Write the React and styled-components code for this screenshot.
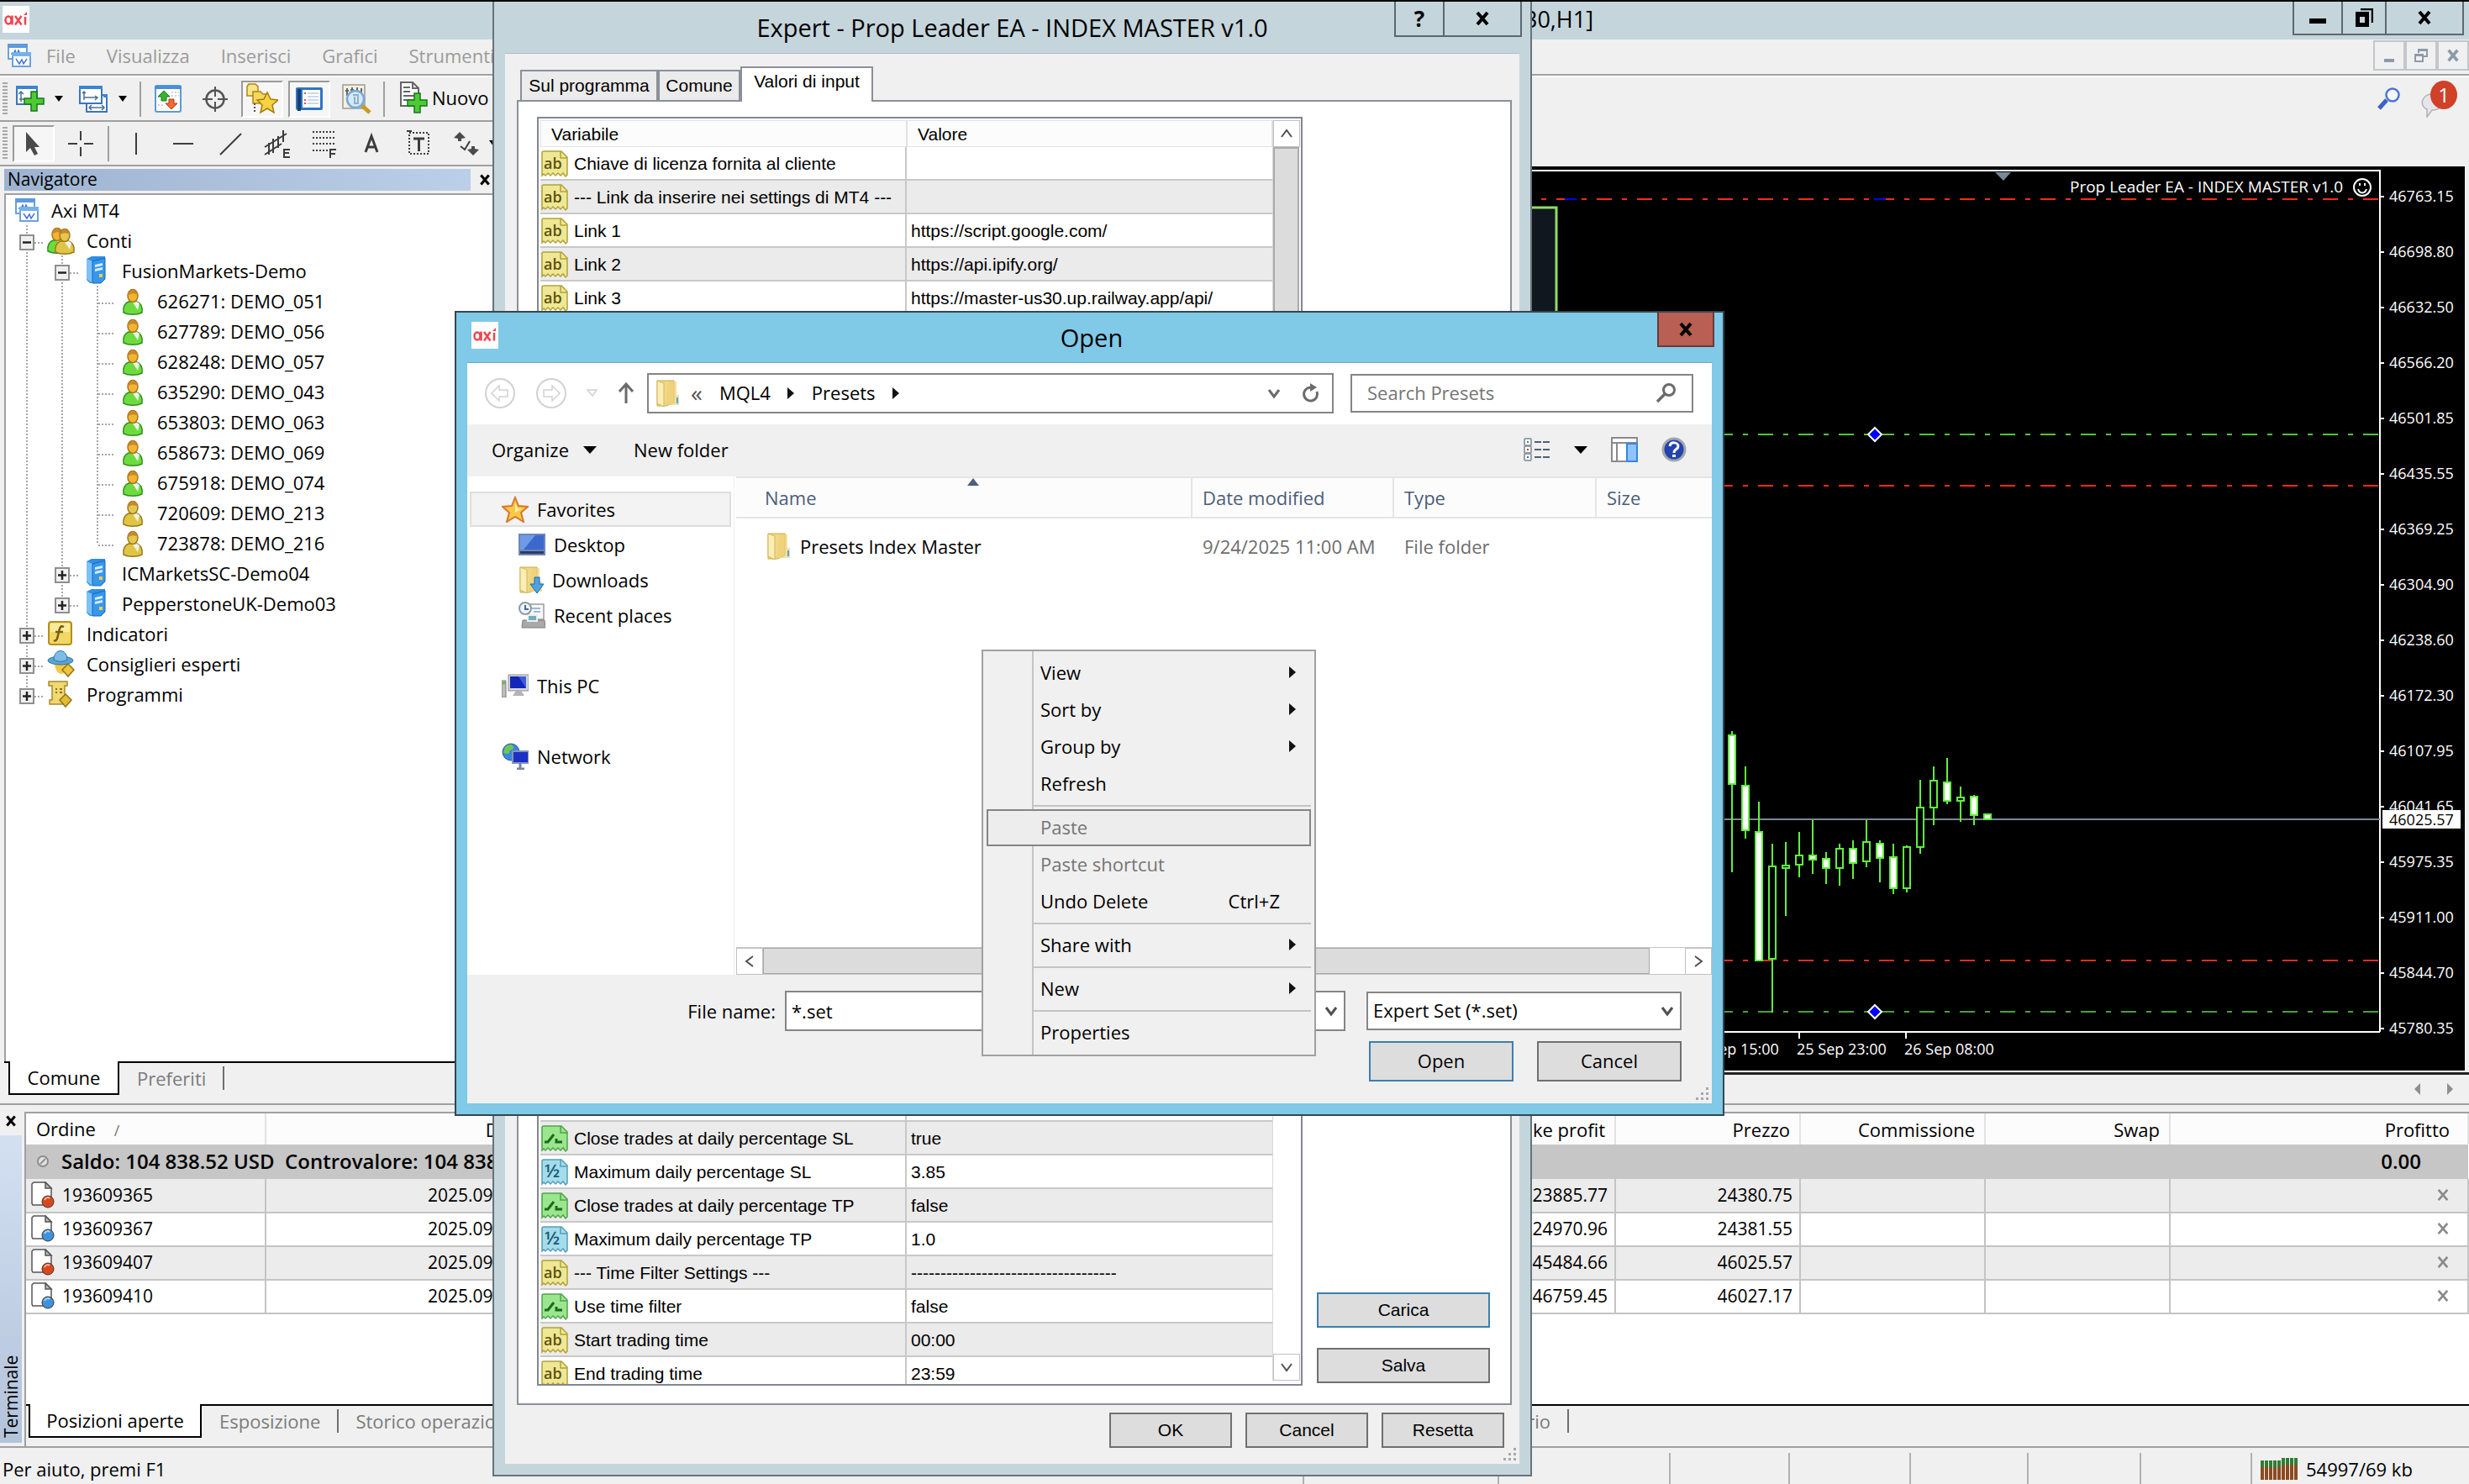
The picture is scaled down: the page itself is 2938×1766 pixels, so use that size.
import styled, { createGlobalStyle, css } from 'styled-components';

const accounts = [
  ['626271: DEMO_051', true],
  ['627789: DEMO_056', true],
  ['628248: DEMO_057', true],
  ['635290: DEMO_043', true],
  ['653803: DEMO_063', true],
  ['658673: DEMO_069', true],
  ['675918: DEMO_074', true],
  ['720609: DEMO_213', false],
  ['723878: DEMO_216', false],
];

const tree = [
  { label: 'Axi MT4', icon: 'charts', guides: [] },
  { label: 'Conti', icon: 'people', guides: ['minus'] },
  { label: 'FusionMarkets-Demo', icon: 'server', guides: ['line', 'minus'] },
  ...accounts.map(([label, active], i) => ({
    label,
    icon: active ? 'userGreen' : 'userGold',
    guides: ['line', 'line', i === accounts.length - 1 ? 'end' : 'tee'],
  })),
  { label: 'ICMarketsSC-Demo04', icon: 'server', guides: ['line', 'plus'] },
  { label: 'PepperstoneUK-Demo03', icon: 'server', guides: ['line', 'plusEnd'] },
  { label: 'Indicatori', icon: 'indicator', guides: ['plus'] },
  { label: 'Consiglieri esperti', icon: 'expert', guides: ['plus'] },
  { label: 'Programmi', icon: 'script', guides: ['plusEnd'] },
];

const orders = [
  { id: '193609365', date: '2025.09.25', tp: '23885.77', price: '24380.75', color: '#d8481c' },
  { id: '193609367', date: '2025.09.25', tp: '24970.96', price: '24381.55', color: '#3b93de' },
  { id: '193609407', date: '2025.09.25', tp: '45484.66', price: '46025.57', color: '#d8481c' },
  { id: '193609410', date: '2025.09.25', tp: '46759.45', price: '46027.17', color: '#3b93de' },
];

const topInputs = [
  ['text', 'Chiave di licenza fornita al cliente', ''],
  ['text', '--- Link da inserire nei settings di MT4 ---', ''],
  ['text', 'Link 1', 'https://script.google.com/'],
  ['text', 'Link 2', 'https://api.ipify.org/'],
  ['text', 'Link 3', 'https://master-us30.up.railway.app/api/'],
];

const bottomInputs = [
  ['bool', 'Close trades at daily percentage SL', 'true'],
  ['num', 'Maximum daily percentage SL', '3.85'],
  ['bool', 'Close trades at daily percentage TP', 'false'],
  ['num', 'Maximum daily percentage TP', '1.0'],
  ['text', '--- Time Filter Settings ---', '-----------------------------------'],
  ['bool', 'Use time filter', 'false'],
  ['text', 'Start trading time', '00:00'],
  ['text', 'End trading time', '23:59'],
];

const prices = [
  '46763.15', '46698.80', '46632.50', '46566.20', '46501.85', '46435.55', '46369.25', '46304.90',
  '46238.60', '46172.30', '46107.95', '46041.65', '45975.35', '45911.00', '45844.70', '45780.35',
];

// wick top, body top, body bottom, wick bottom, filled
const candles = [
  [672, 677, 735, 840, 1], [714, 737, 790, 800, 1], [756, 792, 945, 945, 1], [806, 833, 943, 1007, 0],
  [804, 832, 835, 892, 0], [792, 820, 831, 846, 0], [778, 820, 825, 842, 1], [816, 824, 835, 854, 1],
  [806, 812, 835, 856, 0], [802, 812, 829, 848, 1], [778, 804, 827, 834, 0], [802, 806, 823, 852, 1],
  [806, 822, 859, 866, 1], [808, 810, 859, 864, 0], [730, 763, 810, 818, 0], [714, 731, 763, 784, 0],
  [704, 733, 755, 759, 1], [738, 751, 755, 780, 0], [748, 750, 772, 784, 1], [771, 771, 777, 777, 1],
];

/* ---------- icons ---------- */

const AxiLogo = () => (
  <svg width="32" height="32" viewBox="0 0 32 32" role="img" aria-label="axi">
    <rect width="32" height="32" fill="#fff" />
    <g fill="none" stroke="#ee4450" strokeWidth="2.500">
      <ellipse cx="7" cy="17" rx="3.500" ry="4.500" />
      <path d="M11.500 11.500v11M15 12l7.500 10.500M22.500 12L15 22.500M27 13v9.500" />
    </g>
    <path d="M25 11l4-4v4z" fill="#ee4450" />
  </svg>
);

const Cross = ({ size = 18, color = '#000', weight = 4 }) => (
  <svg width={size} height={size} viewBox="0 0 18 18">
    <path d="M3 2l12 14M15 2L3 16" stroke={color} strokeWidth={weight} />
  </svg>
);

const Caret = () => (
  <svg width="16" height="9" viewBox="0 0 16 9"><path d="M0 0h16L8 9z" fill="#000" /></svg>
);

const SmallCaret = () => (
  <svg width="10" height="7" viewBox="0 0 10 7"><path d="M0 0h10L5 7z" fill="#000" /></svg>
);

const Play = () => (
  <svg width="9" height="14" viewBox="0 0 9 14"><path d="M0 0l8 7-8 7z" fill="#111" /></svg>
);

const Chevron = ({ turn = 0, color = '#505050', weight = 3 }) => (
  <svg width="18" height="18" viewBox="0 0 18 18">
    <path d="M3 5l6 8 6-8" fill="none" stroke={color} strokeWidth={weight} transform={`rotate(${turn} 9 9)`} />
  </svg>
);

const Grip = () => (
  <svg width="18" height="18" viewBox="0 0 18 18" fill="#a8a8a8">
    <path d="M13 1h3v3h-3zM13 7h3v3h-3zM13 13h3v3h-3zM7 7h3v3H7zM7 13h3v3H7zM1 13h3v3H1z" />
  </svg>
);

const MiniCharts = ({ x = 0, y = 0 }) => (
  <g transform={`translate(${x} ${y})`}>
    <rect x="1" y="1" width="22" height="17" fill="#fff" stroke="#6fa0d8" strokeWidth="2" />
    <path d="M0 0h24v5H0z" fill="#5d9bdc" />
    <path d="M4 12h3l2-4 2 5 2-5 2 4h4" fill="none" stroke="#4a72d8" strokeWidth="1.500" />
    <rect x="6" y="11" width="21" height="16" fill="#fff" stroke="#6fa0d8" strokeWidth="2" />
    <path d="M5 10h23v5H5z" fill="#74b3ea" />
    <path d="M10 18l4 6 3-5 2 5 4-6" fill="none" stroke="#4a72d8" strokeWidth="1.500" />
  </g>
);

const Person = ({ x = 0, y = 0, body = '#6ddb3e', edge = '#2f8f1c', head = '#f3b530' }) => (
  <g transform={`translate(${x} ${y})`}>
    <path d="M1 28c-1-7 1-11 6-13h10c5 2 7 6 6 13-6 3-16 3-22 0z" fill={body} stroke={edge} strokeWidth="1.500" />
    <path d="M12 16l6 9 2-8-3-2z" fill="#ecf3e6" />
    <ellipse cx="12" cy="8" rx="6" ry="7.500" fill={head} stroke="#a8741a" strokeWidth="1.500" />
    <path d="M6 8c0-8 12-8 12-1-4-2-8-3-12 1z" fill="#c8892a" />
  </g>
);

const gold = { body: '#e0c545', edge: '#95791a', head: '#e3c84f' };

const TreeIcon = ({ name }) => (
  <svg width="50" height="36" viewBox="0 0 50 36">
    {name === 'charts' && <MiniCharts x={7} y={4} />}
    {name === 'people' && (
      <>
        <Person x={3} y={3} />
        <Person x={12} y={4} {...gold} />
      </>
    )}
    {name === 'userGreen' && <Person x={9} y={4} />}
    {name === 'userGold' && <Person x={9} y={4} {...gold} />}
    {name === 'server' && (
      <>
        <path d="M8 4l6-3h16v27l-6 5H12l-4-4z" fill="#2f8fe6" />
        <path d="M8 4l7 3v26l-7-5z" fill="#7cc2f7" />
        <path d="M15 7l15-4v25l-5 5H15z" fill="#3797ee" stroke="#1867b8" />
        <path d="M18 11l9-2v3l-9 2zM18 16l9-2v3l-9 2z" fill="#d5ecff" />
        <path d="M23 22h4v4h-4z" fill="#f5d23a" />
      </>
    )}
    {name === 'indicator' && (
      <>
        <rect x="5" y="4" width="27" height="27" rx="3" fill="#f2d766" stroke="#b38f22" strokeWidth="2" />
        <path d="M7 6h23v10H7z" fill="#faeb9c" />
        <path d="M23 10c-4-2-5 1-6 6l-2 8c-1 2-2 3-4 2M13 16h9" fill="none" stroke="#7a5f12" strokeWidth="2.500" />
      </>
    )}
    {name === 'expert' && (
      <>
        <path d="M12 16h16c1 10-5 14-8 14s-8-4-8-14z" fill="#f4c842" />
        <ellipse cx="19" cy="14" rx="15" ry="5" fill="#5ba4d4" stroke="#2c73a6" />
        <path d="M11 13c0-14 16-14 16 0-5 3-11 3-16 0z" fill="#7bbde6" stroke="#2c73a6" />
        <path d="M28 18l7 7-7 8-7-8z" fill="#edc63e" stroke="#92741a" strokeWidth="1.500" />
      </>
    )}
    {name === 'script' && (
      <>
        <path d="M5 3h22v5h-3v17h3v5H6v-5h3V8H5z" fill="#f2d870" stroke="#a88a2a" strokeWidth="1.500" />
        <path d="M13 12h2M18 12h3M13 16h2M18 16h3" stroke="#8c7020" strokeWidth="2" />
        <path d="M25 18l7 7-7 8-7-8z" fill="#e3bb34" stroke="#92741a" strokeWidth="1.500" />
      </>
    )}
  </svg>
);

const Guide = ({ kind }) => {
  const box = kind === 'plus' || kind === 'minus' || kind === 'plusEnd';
  const stops = kind === 'end' || kind === 'plusEnd';
  return (
    <svg width="42" height="36" viewBox="0 0 42 36">
      <path d={stops ? 'M21 0v20' : 'M21 0v36'} stroke="#8a8a8a" strokeWidth="1.500" strokeDasharray="2 2" />
      {kind !== 'line' && <path d="M22 21h20" stroke="#8a8a8a" strokeWidth="1.500" strokeDasharray="2 2" />}
      {box && <rect x="13" y="12" width="16" height="17" fill="#f0f0f0" stroke="#8f8f8f" strokeWidth="2" />}
      {box && <path d="M16 20.500h10" stroke="#222" strokeWidth="2.500" />}
      {box && kind !== 'minus' && <path d="M21 15v11" stroke="#222" strokeWidth="2.500" />}
    </svg>
  );
};

const pageColors = {
  text: ['#efe794', '#b1a23a'],
  num: ['#a5dcec', '#559fb5'],
  bool: ['#9be58f', '#4ea548'],
};

const InputIcon = ({ type }) => (
  <svg width="32" height="32" viewBox="0 0 32 32">
    <path
      d="M1 3c0-1 1-2 2-2h21l7 7v21l-2 2-3-4-3 3-3-3-3 3-3-3-3 3-3-3-3 3-2-2-2 2z"
      fill={pageColors[type][0]}
      stroke={pageColors[type][1]}
      strokeWidth="1.500"
    />
    <path d="M23 1v8h8" fill="none" stroke={pageColors[type][1]} strokeWidth="1.500" />
    {type === 'text' && <IconText x="3" y="22" $size={18} $color="#5d520f">ab</IconText>}
    {type === 'num' && <IconText x="4" y="22" $size={22} $color="#175a73">½</IconText>}
    {type === 'bool' && <path d="M4 20h4l7-9M18 16v4h7" fill="none" stroke="#1c6b1a" strokeWidth="3" />}
  </svg>
);

const Plus = ({ x, y }) => (
  <path
    transform={`translate(${x} ${y})`}
    d="M8 0h7v8h8v7h-8v8H8v-8H0V8h8z"
    fill="#4ccb35"
    stroke="#17751a"
    strokeWidth="1.500"
  />
);

const NewChartIcon = () => (
  <svg width="36" height="36" viewBox="0 0 36 36">
    <rect x="2" y="3" width="24" height="21" fill="#fff" stroke="#3a75bd" strokeWidth="2" />
    <path d="M1 2h26v4H1z" fill="#3a86d4" />
    <path d="M7 9v12M4 12l3-3 3 3M5 18h8" fill="none" stroke="#4f6f94" strokeWidth="1.500" />
    <Plus x={11} y={9} />
  </svg>
);

const WindowsIcon = () => (
  <svg width="36" height="36" viewBox="0 0 36 36">
    <rect x="10" y="13" width="24" height="20" fill="#fff" stroke="#3a75bd" strokeWidth="2" />
    <path d="M30 12h5v4h-5z" fill="#3a86d4" />
    <path d="M13 28h18M16 25l-3 3 3 3M28 25l3 3-3 3" fill="none" stroke="#4f6f94" strokeWidth="1.500" />
    <rect x="2" y="3" width="26" height="20" fill="#fff" stroke="#3a75bd" strokeWidth="2" />
    <path d="M1 2h28v4H1z" fill="#3a86d4" />
    <path d="M7 9v10M5 11l2-2 2 2M7 16h16M20 14l3 2-3 3" fill="none" stroke="#4f6f94" strokeWidth="1.500" />
  </svg>
);

const MarketIcon = () => (
  <svg width="36" height="36" viewBox="0 0 36 36">
    <rect x="3" y="2" width="30" height="31" rx="2" fill="#fff" stroke="#5a9ad8" strokeWidth="2" />
    <path d="M2 2h32v4H2z" fill="#4a90d9" />
    <path d="M13 8l7 7h-4v5h-6v-5H6z" fill="#36b52c" stroke="#1c7a1a" />
    <path d="M22 30l-7-7h4v-5h6v5h4z" fill="#f06a36" stroke="#b53912" />
    <path d="M22 10h9M22 14h9M6 25h6" stroke="#c5c5c5" strokeWidth="1.500" strokeDasharray="2 2" />
  </svg>
);

const TargetIcon = () => (
  <svg width="32" height="32" viewBox="0 0 32 32" fill="none" stroke="#555">
    <circle cx="16" cy="16" r="10.500" strokeWidth="2.500" />
    <path d="M16 1v12M16 19v12M1 16h12M19 16h12" strokeWidth="2" />
  </svg>
);

const FolderStarIcon = () => (
  <svg width="38" height="38" viewBox="0 0 38 38">
    <path d="M1 4l2-3h8l3 3v11H1z" fill="#f8e48a" stroke="#ad8616" strokeWidth="1.500" />
    <path d="M8 10h9l3 3h6v11H8z" fill="#f4d65c" stroke="#ad8616" strokeWidth="1.500" />
    <path d="M10 24v12" stroke="#555" strokeWidth="2" strokeDasharray="2 2" />
    <path d="M25 11l4 8 9 1-7 6 2 9-8-5-8 5 2-9-6-6 8-1z" fill="#f6d33f" stroke="#a67c12" strokeWidth="1.500" />
  </svg>
);

const NotebookIcon = () => (
  <svg width="34" height="34" viewBox="0 0 34 34">
    <rect x="1" y="3" width="32" height="27" rx="2" fill="#2e74c4" />
    <path d="M9 6h21v21H9z" fill="#fff" />
    <path d="M3 5h4v26H3z" fill="#163e73" />
    <path d="M15 10h13M15 14h13M15 18h13M15 22h13" stroke="#b9cbe2" strokeWidth="1.500" />
    <path d="M11 9h2v2h-2zM11 17h2v2h-2zM11 21h2v2h-2z" fill="#e2554a" />
  </svg>
);

const TesterIcon = () => (
  <svg width="38" height="38" viewBox="0 0 38 38">
    <path d="M3 2h26v28H3z" fill="#f4f0e2" stroke="#9a9a8c" strokeWidth="1.500" />
    <path d="M8 6v9M14 5v10M20 5v9M25 6v6M6 9h4M12 8h4M18 10h4" stroke="#666" strokeWidth="2" />
    <path d="M25 26l10 9" stroke="#c99a22" strokeWidth="5" />
    <circle cx="18" cy="19" r="10" fill="#d4e9f9" stroke="#7aa9d4" strokeWidth="2.500" />
    <path d="M15 14h6v10h-4v-8" fill="none" stroke="#8fb0cc" strokeWidth="2" />
  </svg>
);

const NewOrderIcon = () => (
  <svg width="36" height="40" viewBox="0 0 36 40">
    <path d="M3 2h14l7 7v21H3z" fill="#fff" stroke="#666" strokeWidth="2" />
    <path d="M17 2v7h7M6 8h8M6 13h8M6 18h15M6 23h12" fill="none" stroke="#666" strokeWidth="2" />
    <Plus x={11} y={15} />
  </svg>
);

const DrawIcon = ({ name }) => (
  <svg width="32" height="36" viewBox="0 0 32 36" fill="none" stroke="#3c3c3c" strokeWidth="2">
    {name === 'cursor' && <path d="M7 4v24l5-5 5 9 4-2-4-8h6z" fill="#4a4a4a" stroke="none" />}
    {name === 'cross' && <path d="M16 3v11M16 22v11M1 18h11M20 18h11" />}
    {name === 'vline' && <path d="M16 5v26" />}
    {name === 'hline' && <path d="M4 18h24" />}
    {name === 'trend' && <path d="M4 31L29 6" />}
    {name === 'channel' && (
      <>
        <path d="M1 22L27 6M1 31l20-13M6 17v14M11 12v17M17 9v14M23 2v14" />
        <path d="M31 25h-7v9h7M24 29h6" />
      </>
    )}
    {name === 'fibo' && (
      <>
        <path d="M2 4h28M2 11h28M2 18h28M2 26h18" strokeDasharray="2 2" />
        <path d="M30 25h-7v10M23 30h6" />
      </>
    )}
    {name === 'text' && <path d="M9 28l7-19 7 19M11 22h10" strokeWidth="3" />}
    {name === 'label' && (
      <>
        <rect x="5" y="5" width="23" height="25" strokeDasharray="2 2" />
        <path d="M2 3h6" />
        <path d="M10 12h13M16.500 12v15" strokeWidth="3" />
      </>
    )}
    {name === 'arrows' && (
      <>
        <path d="M9 4l7 7-5 1v3H7v-3l-5-1zM25 32l-7-7 5-1v-3h4v3l5 1z" fill="#4a4a4a" stroke="none" />
        <path d="M10 21l5 4 6-10" />
      </>
    )}
  </svg>
);

const SearchGlass = () => (
  <svg width="30" height="30" viewBox="0 0 30 30" fill="none">
    <path d="M3 27l9-10" stroke="#3c62c8" strokeWidth="5" />
    <circle cx="19" cy="11" r="7.500" fill="#f5f9ff" stroke="#4d74d8" strokeWidth="2.500" />
  </svg>
);

const FolderIcon = ({ arrow }) => (
  <svg width="30" height="34" viewBox="0 0 30 34">
    <path d="M2 2h20v26l-9 4H2z" fill="#f0d885" stroke="#c9a94a" />
    <path d="M2 2l8 3v28l-8-4z" fill="#fbeeb4" stroke="#d3b65b" />
    <path d="M16 3h9v16h3v12H12z" fill="#ecd277" opacity=".7" />
    {arrow ? (
      <path d="M19 14h6v8h5l-8 11-8-11h5z" fill="#4fa3e3" stroke="#1b69b3" />
    ) : (
      <path d="M25 22h2v7h-2z" fill="#4fa3e3" />
    )}
  </svg>
);

const StarIcon = () => (
  <svg width="32" height="32" viewBox="0 0 32 32">
    <path d="M16 2l4 10 11 1-8 7 3 11-10-6-10 6 3-11-8-7 11-1z" fill="#fbc847" stroke="#d9772a" strokeWidth="2" />
    <path d="M16 7l3 8h6l-9 5z" fill="#fdeaa0" />
  </svg>
);

const DesktopIcon = () => (
  <svg width="32" height="28" viewBox="0 0 32 28">
    <path d="M0 1h32v26H0z" fill="#6e86b8" />
    <path d="M2 3h28v17H2z" fill="#3b68cd" />
    <path d="M2 3h18L6 20H2z" fill="#6f9ae8" />
    <path d="M2 22h28v3H2z" fill="#2c3d63" />
  </svg>
);

const RecentIcon = () => (
  <svg width="32" height="32" viewBox="0 0 32 32">
    <path d="M12 3h18v18H12z" fill="#f7f7f7" stroke="#9c9c9c" strokeWidth="1.500" />
    <path d="M16 8h10M18 12h8" stroke="#9bb8d8" strokeWidth="2" />
    <path d="M5 22h26l1 9H4z" fill="#a9a9a9" stroke="#7e7e7e" />
    <path d="M11 16h11v7H11z" fill="#6fb1b8" stroke="#eee" strokeWidth="2" />
    <circle cx="8" cy="8" r="7" fill="#eef4f8" stroke="#8e9aa5" strokeWidth="2" />
    <path d="M8 4v5h4" fill="none" stroke="#49688c" strokeWidth="2" />
  </svg>
);

const PcIcon = () => (
  <svg width="32" height="28" viewBox="0 0 32 28">
    <path d="M0 8h5v20H0z" fill="#bdbdbd" stroke="#7c7c7c" />
    <path d="M1 11h3" stroke="#58c33c" strokeWidth="3" />
    <path d="M8 1h24v19H8z" fill="#d6d6d6" stroke="#8d8d8d" />
    <path d="M10 3h19v14H10z" fill="#1226b8" />
    <path d="M20 3h9v14z" fill="#3c5be0" />
    <path d="M17 20h6l4 6H13z" fill="#b3b3b3" />
  </svg>
);

const NetworkIcon = () => (
  <svg width="32" height="32" viewBox="0 0 32 32">
    <circle cx="11" cy="11" r="10" fill="#3d87d8" stroke="#2a5c9c" />
    <path d="M4 5c6-5 9-3 10 0s-5 3-5 6-4 2-7 1z" fill="#72c455" />
    <path d="M13 10h19v14H13z" fill="#1c30c4" stroke="#8594b8" strokeWidth="2" />
    <path d="M22 24v6M18 31h9" stroke="#7a869e" strokeWidth="3" />
  </svg>
);

const ArrowCircle = ({ flip }) => (
  <svg width="38" height="38" viewBox="0 0 38 38" fill="none" stroke="#d2d2d2">
    <circle cx="19" cy="19" r="17" strokeWidth="2" />
    <path
      d="M9 19l9-9v5h10v8H18v5z"
      strokeWidth="1.500"
      transform={flip ? 'rotate(180 19 19)' : undefined}
    />
  </svg>
);

const HelpIcon = () => (
  <svg width="30" height="30" viewBox="0 0 30 30">
    <circle cx="15" cy="15" r="13" fill="#2343ad" stroke="#a3a6ad" strokeWidth="3" />
    <path d="M10 11c1-6 10-5 10 0 0 4-5 3-5 8" fill="none" stroke="#fff" strokeWidth="3" />
    <path d="M13 21h4v3h-4z" fill="#fff" />
  </svg>
);

const OrderIcon = ({ color }) => (
  <svg width="30" height="32" viewBox="0 0 30 32">
    <path d="M2 3l2-2h14l7 7v20H3l-1-2z" fill="#fff" stroke="#555" strokeWidth="1.500" />
    <path d="M18 1v7h7z" fill="#bbb" stroke="#555" strokeWidth="1.500" />
    <circle cx="21" cy="24" r="7" fill={color} stroke="#44311f" strokeWidth="1" />
    <path d="M17 22c2-4 5-3 6-2" fill="none" stroke="#fff" strokeOpacity=".6" strokeWidth="2" />
  </svg>
);

const Chart = () => (
  <ChartSvg viewBox="0 0 1111 1072" role="img" aria-label="US30,H1">
    <path d="M-10 49H30V200H-10z" fill="#10171f" stroke="#8fdc66" strokeWidth="3" />
    <path d="M0 5H1010V1030M1010 1030H0" fill="none" stroke="#fff" strokeWidth="2" />
    <path d="M552 7h19l-9 10z" fill="#778899" />
    <ChartText x="641" y="31" $size={19}>Prop Leader EA - INDEX MASTER v1.0</ChartText>
    <g fill="none" stroke="#fff" strokeWidth="2">
      <circle cx="989" cy="25" r="10" />
      <path d="M984 27c2 6 8 6 10 0M986 20v3M992 20v3" />
    </g>
    {[[39, '#ff2a18'], [319, '#4ec836'], [380, '#ff2a18'], [945, '#d9301d'], [1006, '#43a532']].map(([y, color]) => (
      <path key={y} d={`M1008 ${y}H0`} stroke={color} strokeWidth="2" strokeDasharray="18 12 6 12" />
    ))}
    <path d="M40 39h14M408 39h14" stroke="#0000ff" strokeWidth="2" />
    <path d="M0 777H1010" stroke="#778899" strokeWidth="2" />
    {candles.map(([wickTop, top, bottom, wickBottom, filled], i) => {
      const x = 239 + i * 16;
      return (
        <g key={x} stroke="#5ff03c" strokeWidth="2">
          <path d={`M${x} ${wickTop}V${wickBottom}`} />
          <rect x={x - 4} y={top} width="8" height={bottom - top} fill={filled ? '#fff' : '#000'} />
        </g>
      );
    })}
    {[[409, 319], [409, 1006]].map(([x, y]) => (
      <path key={y} d={`M${x} ${y - 8}l8 8-8 8-8-8z`} fill="#0000ff" stroke="#fff" strokeWidth="2" />
    ))}
    {prices.map((price, i) => (
      <g key={price}>
        <path d={`M1010 ${36 + i * 66}h5`} stroke="#fff" strokeWidth="2" />
        <ChartText x="1021" y={42 + i * 66}>{price}</ChartText>
      </g>
    ))}
    <rect x="1013" y="766" width="93" height="22" fill="#fff" />
    <ChartText x="1021" y="784" $dark>46025.57</ChartText>
    <path d="M319 1030v8M446 1030v8" stroke="#fff" strokeWidth="2" />
    <ChartText x="188" y="1057">25 Sep 15:00</ChartText>
    <ChartText x="316" y="1057">25 Sep 23:00</ChartText>
    <ChartText x="444" y="1057">26 Sep 08:00</ChartText>
  </ChartSvg>
);

/* ---------- windows ---------- */

const InputRow = ({ row: [type, name, value], shaded }) => (
  <InputTr $shaded={shaded}>
    <InputTd>
      <NameCell>
        <InputIcon type={type} />
        {name}
      </NameCell>
    </InputTd>
    <InputTd>{value}</InputTd>
  </InputTr>
);

const ExpertWindow = () => (
  <ExpertFrame role="dialog" aria-label="Expert">
    <ExpertTitleBar>
      <WindowTitle>Expert - Prop Leader EA - INDEX MASTER v1.0</WindowTitle>
      <Controls>
        <ControlButton $width={56} aria-label="Help">?</ControlButton>
        <ControlButton $width={92} aria-label="Close"><Cross /></ControlButton>
      </Controls>
    </ExpertTitleBar>
    <ExpertClient>
      <SheetTabs role="tablist">
        <SheetTab role="tab" $width={164}>Sul programma</SheetTab>
        <SheetTab role="tab" $width={98}>Comune</SheetTab>
        <SheetTab role="tab" $width={158} $active>Valori di input</SheetTab>
      </SheetTabs>
      <Sheet>
        <InputList>
          <InputTable>
            <colgroup>
              <InputCol $width={436} />
              <col />
            </colgroup>
            <thead>
              <tr>
                <InputTh>Variabile</InputTh>
                <InputTh>Valore</InputTh>
              </tr>
            </thead>
            <tbody>
              {topInputs.map((row, i) => <InputRow key={row[1]} row={row} shaded={i % 2 === 1} />)}
              <SkippedRows aria-hidden="true"><InputTd /><InputTd /></SkippedRows>
              {bottomInputs.map((row, i) => <InputRow key={row[1]} row={row} shaded={i % 2 === 0} />)}
            </tbody>
          </InputTable>
          <VerticalBar>
            <BarButton aria-label="Scroll up"><Chevron turn={180} weight={2} /></BarButton>
            <VerticalThumb />
            <BarButton aria-label="Scroll down"><Chevron weight={2} /></BarButton>
          </VerticalBar>
        </InputList>
        <SheetActions>
          <PushButton $default>Carica</PushButton>
          <PushButton>Salva</PushButton>
        </SheetActions>
      </Sheet>
      <ExpertFooter>
        <PushButton>OK</PushButton>
        <PushButton>Cancel</PushButton>
        <PushButton>Resetta</PushButton>
        <Corner><Grip /></Corner>
      </ExpertFooter>
    </ExpertClient>
  </ExpertFrame>
);

const ContextMenu = () => (
  <Menu role="menu">
    <MenuItem role="menuitem">View<Play /></MenuItem>
    <MenuItem role="menuitem">Sort by<Play /></MenuItem>
    <MenuItem role="menuitem">Group by<Play /></MenuItem>
    <MenuItem role="menuitem">Refresh</MenuItem>
    <MenuLine />
    <MenuItem role="menuitem" disabled $hover>Paste</MenuItem>
    <MenuItem role="menuitem" disabled>Paste shortcut</MenuItem>
    <MenuItem role="menuitem">Undo Delete<Shortcut>Ctrl+Z</Shortcut></MenuItem>
    <MenuLine />
    <MenuItem role="menuitem">Share with<Play /></MenuItem>
    <MenuLine />
    <MenuItem role="menuitem">New<Play /></MenuItem>
    <MenuLine />
    <MenuItem role="menuitem">Properties</MenuItem>
  </Menu>
);

const OpenWindow = () => (
  <OpenFrame role="dialog" aria-label="Open">
    <OpenTitleBar>
      <AxiLogo />
      <WindowTitle>Open</WindowTitle>
      <CloseButton aria-label="Close"><Cross /></CloseButton>
    </OpenTitleBar>
    <OpenClient>
      <AddressRow>
        <NavButtons>
          <IconButton aria-label="Back"><ArrowCircle /></IconButton>
          <IconButton aria-label="Forward"><ArrowCircle flip /></IconButton>
          <IconButton aria-label="Recent locations">
            <svg width="14" height="10" viewBox="0 0 14 10"><path d="M1 1h11L7 8z" fill="none" stroke="#d0d0d0" strokeWidth="1.500" /></svg>
          </IconButton>
          <IconButton aria-label="Up">
            <svg width="20" height="26" viewBox="0 0 20 26"><path d="M10 25V3M2 11l8-9 8 9" fill="none" stroke="#6b6b6b" strokeWidth="3" /></svg>
          </IconButton>
        </NavButtons>
        <AddressBox>
          <FolderIcon />
          <CrumbMark>«</CrumbMark>
          <Crumb>MQL4</Crumb>
          <Play />
          <Crumb>Presets</Crumb>
          <Play />
          <AddressTools>
            <Chevron color="#6b6b6b" />
            <svg width="22" height="26" viewBox="0 0 22 26">
              <path d="M18 11a8 8 0 1 1-7-5" fill="none" stroke="#6b6b6b" strokeWidth="3" />
              <path d="M10 1l8 5-8 5z" fill="#6b6b6b" />
            </svg>
          </AddressTools>
        </AddressBox>
        <SearchBox>
          <SearchInput type="search" aria-label="Search Presets" placeholder="Search Presets" />
          <svg width="24" height="24" viewBox="0 0 24 24" fill="none" stroke="#6b6b6b">
            <circle cx="15" cy="8" r="6.500" strokeWidth="3" />
            <path d="M1 22l9-9" strokeWidth="3.500" />
          </svg>
        </SearchBox>
      </AddressRow>
      <CommandRow>
        <CommandButton>Organize<Caret /></CommandButton>
        <CommandButton>New folder</CommandButton>
        <CommandTools>
          <svg width="32" height="28" viewBox="0 0 32 28">
            {[['#3f9148', 5], ['#d43c2e', 14], ['#3768c9', 23]].map(([color, y]) => (
              <g key={y}>
                <rect x="1" y={y - 4} width="8" height="8" rx="1" fill="#fff" stroke="#7b8794" strokeWidth="1.500" />
                <path d={`M4 ${y - 1}h2v2h-2z`} fill={color} />
                <path d={`M13 ${y}h8M23 ${y}h8`} stroke="#4f5f75" strokeWidth="2" />
              </g>
            ))}
          </svg>
          <Caret />
          <svg width="32" height="30" viewBox="0 0 32 30">
            <path d="M1 1h30v28H1zM1 7h30M7 7v22" fill="#fff" stroke="#8a8a8a" strokeWidth="2" />
            <rect x="19" y="8" width="12" height="21" fill="#8fc3fb" stroke="#3485e4" strokeWidth="2" />
          </svg>
          <HelpIcon />
        </CommandTools>
      </CommandRow>
      <Browser>
        <Places>
          <Place href="#favorites" $selected><StarIcon />Favorites</Place>
          <Place href="#desktop" $nested><DesktopIcon />Desktop</Place>
          <Place href="#downloads" $nested><FolderIcon arrow />Downloads</Place>
          <Place href="#recent" $nested><RecentIcon />Recent places</Place>
          <Place href="#pc" $apart><PcIcon />This PC</Place>
          <Place href="#network" $apart><NetworkIcon />Network</Place>
        </Places>
        <Files>
          <FileTable>
            <colgroup>
              <col />
              <FileCol $width={240} />
              <FileCol $width={241} />
              <FileCol $width={137} />
            </colgroup>
            <thead>
              <tr>
                <FileTh $first>
                  Name
                  <SortMark><svg width="14" height="9" viewBox="0 0 14 9"><path d="M0 9l7-9 7 9z" fill="#4c6080" /></svg></SortMark>
                </FileTh>
                <FileTh>Date modified</FileTh>
                <FileTh>Type</FileTh>
                <FileTh>Size</FileTh>
              </tr>
            </thead>
            <tbody>
              <tr>
                <FileTd $first><FileName><FolderIcon />Presets Index Master</FileName></FileTd>
                <FileTd>9/24/2025 11:00 AM</FileTd>
                <FileTd>File folder</FileTd>
                <FileTd />
              </tr>
            </tbody>
          </FileTable>
          <HorizontalBar>
            <BarButton aria-label="Scroll left"><Chevron turn={90} weight={2} /></BarButton>
            <HorizontalThumb />
            <BarButton aria-label="Scroll right"><Chevron turn={-90} weight={2} /></BarButton>
          </HorizontalBar>
        </Files>
      </Browser>
      <OpenFooter>
        <FieldRow>
          <FieldLabel htmlFor="file-name">File name:</FieldLabel>
          <ComboBox>
            <ComboInput id="file-name" defaultValue="*.set" />
            <Chevron />
          </ComboBox>
          <TypeBox>
            <TypeSelect aria-label="File type" defaultValue="set">
              <option value="set">Expert Set (*.set)</option>
            </TypeSelect>
            <Chevron />
          </TypeBox>
        </FieldRow>
        <OpenActions>
          <PushButton $default>Open</PushButton>
          <PushButton>Cancel</PushButton>
        </OpenActions>
        <Corner><Grip /></Corner>
      </OpenFooter>
    </OpenClient>
  </OpenFrame>
);

const App = () => (
  <Terminal>
    <GlobalStyle />
    <TitleBar>
      <AxiLogo />
      <MainTitle>[US30,H1]</MainTitle>
      <Controls>
        <ControlButton $width={56} aria-label="Minimize">
          <svg width="20" height="18" viewBox="0 0 20 18"><path d="M0 10h20v6H0z" /></svg>
        </ControlButton>
        <ControlButton $width={52} aria-label="Restore">
          <svg width="22" height="22" viewBox="0 0 22 22">
            <path d="M7 1h14v16" fill="none" stroke="#000" strokeWidth="2.500" />
            <path d="M1 4h16v18H1zM6 10v7h6v-7z" fillRule="evenodd" />
          </svg>
        </ControlButton>
        <ControlButton $width={92} aria-label="Close"><Cross /></ControlButton>
      </Controls>
    </TitleBar>

    <MenuBar>
      <svg width="30" height="30" viewBox="0 0 30 30"><MiniCharts x={1} y={1} /></svg>
      {['File', 'Visualizza', 'Inserisci', 'Grafici', 'Strumenti'].map((item) => (
        <MenuButton key={item}>{item}</MenuButton>
      ))}
      <ChildControls>
        <ChildButton aria-label="Minimize chart">
          <svg width="14" height="18" viewBox="0 0 14 18"><path d="M1 13h12v4H1z" fill="#8c9bab" /></svg>
        </ChildButton>
        <ChildButton aria-label="Restore chart">
          <svg width="18" height="18" viewBox="0 0 18 18" fill="none" stroke="#8c9bab" strokeWidth="2">
            <path d="M6 6V2h10v8h-4M2 8h9v8H2zM2 9h9M6 3h10" />
          </svg>
        </ChildButton>
        <ChildButton aria-label="Close chart"><Cross size={16} color="#8c9bab" /></ChildButton>
      </ChildControls>
    </MenuBar>

    <Tools>
      <ToolStrips>
        <ToolStrip>
          <StripHandle />
          <ToolButton $width={42} aria-label="New chart"><NewChartIcon /></ToolButton>
          <DropButton aria-label="New chart options"><SmallCaret /></DropButton>
          <ToolButton $width={44} aria-label="Profiles"><WindowsIcon /></ToolButton>
          <DropButton aria-label="Profile options"><SmallCaret /></DropButton>
          <Divider />
          <ToolButton aria-label="Market watch"><MarketIcon /></ToolButton>
          <ToolButton aria-label="Data window"><TargetIcon /></ToolButton>
          <ToolButton $pressed aria-label="Navigator"><FolderStarIcon /></ToolButton>
          <ToolButton $pressed aria-label="Terminal"><NotebookIcon /></ToolButton>
          <ToolButton aria-label="Strategy tester"><TesterIcon /></ToolButton>
          <Divider />
          <OrderButton><NewOrderIcon />Nuovo Ordine</OrderButton>
        </ToolStrip>
        <ToolStrip>
          <StripHandle />
          <ToolButton $pressed aria-label="Cursor"><DrawIcon name="cursor" /></ToolButton>
          <ToolButton aria-label="Crosshair"><DrawIcon name="cross" /></ToolButton>
          <Divider />
          {['vline', 'hline', 'trend', 'channel', 'fibo', 'text', 'label', 'arrows'].map((name) => (
            <ToolButton key={name} aria-label={name}><DrawIcon name={name} /></ToolButton>
          ))}
          <SmallCaret />
        </ToolStrip>
      </ToolStrips>
      <ToolsRight>
        <IconButton aria-label="Search"><SearchGlass /></IconButton>
        <Notice aria-label="1 message">
          <svg width="32" height="30" viewBox="0 0 32 30">
            <path d="M14 2c16 0 16 20 0 19l-6 8v-9C-2 16 2 2 14 2z" fill="#e6e6ea" stroke="#b0b0b6" strokeWidth="1.500" />
          </svg>
          <Badge>1</Badge>
        </Notice>
      </ToolsRight>
    </Tools>

    <Workspace>
      <Navigator>
        <NavHeader>
          <NavTitle>Navigatore</NavTitle>
          <IconButton aria-label="Close navigator"><Cross size={14} /></IconButton>
        </NavHeader>
        <TreeList>
          {tree.map(({ label, icon, guides }) => (
            <TreeItem key={label}>
              {guides.map((kind, i) => <Guide key={i} kind={kind} />)}
              <TreeIcon name={icon} />
              {label}
            </TreeItem>
          ))}
        </TreeList>
        <TabStrip role="tablist">
          <FrontTab role="tab" $width={132}>Comune</FrontTab>
          <BackTab role="tab">Preferiti</BackTab>
        </TabStrip>
      </Navigator>
      <ChartColumn>
        <ChartPane><Chart /></ChartPane>
        <ChartTabs>
          <svg width="10" height="14" viewBox="0 0 10 14"><path d="M8 0v14L1 7z" fill="#8f8f8f" /></svg>
          <svg width="10" height="14" viewBox="0 0 10 14"><path d="M2 0v14l7-7z" fill="#8f8f8f" /></svg>
        </ChartTabs>
      </ChartColumn>
    </Workspace>

    <TradePanel>
      <TradeSide>
        <IconButton aria-label="Close terminal"><Cross size={14} /></IconButton>
        <SideLabel>Terminale</SideLabel>
      </TradeSide>
      <TradeMain>
        <OrdersTable>
          <colgroup>
            <OrderCol $width={285} />
            <OrderCol $width={322} />
            <col />
            <OrderCol $width={220} />
            <OrderCol $width={220} />
            <OrderCol $width={220} />
            <OrderCol $width={355} />
          </colgroup>
          <thead>
            <tr>
              <OrderTh $left>Ordine <Slash>/</Slash></OrderTh>
              <OrderTh>Data</OrderTh>
              <OrderTh>Take profit</OrderTh>
              <OrderTh>Prezzo</OrderTh>
              <OrderTh>Commissione</OrderTh>
              <OrderTh>Swap</OrderTh>
              <OrderTh $wide>Profitto</OrderTh>
            </tr>
          </thead>
          <tbody>
            <BalanceRow>
              <BalanceTd colSpan={6}>
                <Balance>
                  <svg width="16" height="16" viewBox="0 0 16 16">
                    <circle cx="8" cy="8" r="6" fill="#e2e2e2" stroke="#8d8d8d" strokeWidth="2" />
                    <path d="M5 11l6-6" stroke="#8d8d8d" strokeWidth="2" />
                  </svg>
                  <span>Saldo: 104 838.52 USD&nbsp; Controvalore: 104 838.52</span>
                </Balance>
              </BalanceTd>
              <BalanceTd $right>0.00</BalanceTd>
            </BalanceRow>
            {orders.map(({ id, date, tp, price, color }, i) => (
              <OrderTr key={id} $shaded={i % 2 === 0}>
                <OrderTd><OrderId><OrderIcon color={color} />{id}</OrderId></OrderTd>
                <OrderTd $wide>{date}</OrderTd>
                <OrderTd>{tp}</OrderTd>
                <OrderTd>{price}</OrderTd>
                <OrderTd />
                <OrderTd />
                <OrderTd $wide>
                  <IconButton aria-label={`Close ${id}`}><Cross size={16} color="#8a8a8a" weight={3} /></IconButton>
                </OrderTd>
              </OrderTr>
            ))}
          </tbody>
        </OrdersTable>
        <TabStrip role="tablist">
          <FrontTab role="tab" $width={206}>Posizioni aperte</FrontTab>
          <BackTab role="tab">Esposizione</BackTab>
          <BackTab role="tab">Storico operazioni</BackTab>
          <TabGap />
          <BackTab role="tab">Diario</BackTab>
        </TabStrip>
      </TradeMain>
    </TradePanel>

    <StatusBar>
      <span>Per aiuto, premi F1</span>
      <StatusCells>
        {[232, 204, 142, 144, 140, 134, 132].map((width, i) => <StatusCell key={i} $width={width} />)}
        <Traffic>
          <svg width="46" height="26" viewBox="0 0 46 26">
            {Array.from({ length: 9 }, (_, i) => (
              <g key={i}>
                <path d={`M${i * 5} ${i > 4 ? 0 : 3}h4v26h-4z`} fill="#2f7d32" />
                <path d={`M${i * 5} ${i > 4 ? 8 : 11}h4v18h-4z`} fill="#8c4a20" />
              </g>
            ))}
          </svg>
          54997/69 kb
        </Traffic>
      </StatusCells>
    </StatusBar>

    <ExpertWindow />
    <OpenWindow />
    <ContextMenu />
  </Terminal>
);

/* ---------- styles ---------- */

const ui = '"Open Sans", "Noto Sans", sans-serif';
const classic = '"Liberation Sans", Arial, sans-serif';

const GlobalStyle = createGlobalStyle`
  * {
    box-sizing: border-box;
  }

  body {
    margin: 0;
    background: #f0f0f0;
    color: #000;
    font-family: ${ui};
    font-size: 22px;
    line-height: 28px;
  }

  button,
  input,
  select {
    margin: 0;
    padding: 0;
    border: 0;
    border-radius: 0;
    background: none;
    color: inherit;
    font: inherit;
  }

  svg {
    display: block;
    flex: none;
  }
`;

const Terminal = styled.div`
  position: relative;
  display: flex;
  flex-direction: column;
  min-height: 100vh;
  overflow: hidden;
  white-space: nowrap;
`;

const IconButton = styled.button`
  display: flex;
  align-items: center;
  justify-content: center;
`;

const TitleBar = styled.header`
  display: flex;
  align-items: center;
  height: 47px;
  padding: 0 6px 4px 3px;
  border-top: 2px solid #000;
  background: #c5d5dc;
`;

const MainTitle = styled.h1`
  flex: 1;
  margin: 0;
  padding-right: 832px;
  font-size: 27px;
  font-weight: 400;
  text-align: right;
`;

const Controls = styled.div`
  display: flex;
  align-self: flex-start;
  border: 2px solid #5d686e;
  border-top: 0;
`;

const ControlButton = styled.button`
  display: flex;
  align-items: center;
  justify-content: center;
  width: ${({ $width }) => $width}px;
  height: 38px;
  font-weight: 700;
  font-size: 26px;

  & + & {
    border-left: 2px solid #5d686e;
  }
`;

const MenuBar = styled.nav`
  display: flex;
  align-items: center;
  gap: 37px;
  height: 43px;
  padding: 0 0 3px 8px;
  border-bottom: 2px solid #a0a0a0;
  color: #9b9b9b;

  > svg {
    margin-right: -20px;
  }
`;

const MenuButton = styled.button`
  height: 36px;
`;

const ChildControls = styled.div`
  display: flex;
  margin-left: auto;
`;

const ChildButton = styled.button`
  display: flex;
  align-items: center;
  justify-content: center;
  width: 38px;
  height: 36px;
  border: 2px solid #c3c7ca;
`;

const Tools = styled.div`
  display: flex;
  justify-content: space-between;
  border-top: 2px solid #fff;
`;

const ToolStrips = styled.div`
  width: 60%;
`;

const ToolStrip = styled.div`
  display: flex;
  align-items: center;
  height: 53px;
  border-bottom: 2px solid #a0a0a0;
`;

const StripHandle = styled.div`
  width: 6px;
  height: 40px;
  margin: 0 3px;
  background: repeating-linear-gradient(#a8a8a8 0 2px, #f0f0f0 2px 4px);
`;

const ToolButton = styled.button`
  display: flex;
  align-items: center;
  justify-content: center;
  width: ${({ $width = 50 }) => $width}px;
  height: 44px;
  margin: 0 3px;
  ${({ $pressed }) => $pressed && css`
    border: 2px solid #fff;
    border-top-color: #9a9a9a;
    border-left-color: #9a9a9a;
    background: #f6f6f6;
  `}
`;

const DropButton = styled.button`
  display: flex;
  justify-content: center;
  width: 32px;
  margin-left: -6px;
`;

const Divider = styled.div`
  width: 2px;
  height: 42px;
  margin: 0 4px;
  background: #a0a0a0;
`;

const OrderButton = styled.button`
  display: flex;
  align-items: center;
  gap: 4px;
  margin-left: 12px;
  padding-bottom: 3px;
`;

const ToolsRight = styled.div`
  display: flex;
  align-items: flex-start;
  gap: 22px;
  padding: 10px 14px 0 0;
`;

const Notice = styled.button`
  position: relative;
  display: flex;
  align-items: flex-end;
  width: 44px;
  height: 38px;
`;

const Badge = styled.span`
  position: absolute;
  top: -6px;
  right: 0;
  width: 32px;
  height: 34px;
  border-radius: 50%;
  background: #cf4128;
  color: #fff;
  font-size: 24px;
  line-height: 34px;
`;

const Workspace = styled.main`
  display: flex;
  flex: 1;
`;

const Navigator = styled.section`
  display: flex;
  flex-direction: column;
  width: 588px;
  padding: 3px 0 0 5px;
`;

const NavHeader = styled.div`
  display: flex;
  align-items: center;
  gap: 10px;
  height: 26px;
  margin-bottom: 3px;
`;

const NavTitle = styled.h2`
  width: 555px;
  height: 26px;
  margin: 0;
  padding-left: 4px;
  background: linear-gradient(90deg, #9db3d0, #bccfe8);
  font-size: 21px;
  font-weight: 400;
  line-height: 24px;
`;

const TreeList = styled.ul`
  flex: 1;
  margin: 0;
  padding: 0 0 0 4px;
  border: 2px solid #a0a0a0;
  border-width: 2px 0 0 2px;
  background: #fff;
  list-style: none;
`;

const TreeItem = styled.li`
  display: flex;
  align-items: center;
  height: 36px;
`;

const TabStrip = styled.div`
  display: flex;
  height: 50px;
  padding-left: 5px;
  border-top: 2px solid #000;
`;

const FrontTab = styled.button`
  width: ${({ $width }) => $width}px;
  height: 40px;
  margin-top: -2px;
  margin-right: 1px;
  border: 2px solid #000;
  border-top: 0;
  background: #fff;
`;

const BackTab = styled.button`
  display: flex;
  align-items: center;
  height: 38px;
  padding: 0 0 2px 20px;
  color: #7b7b7b;

  &::after {
    content: '';
    width: 2px;
    height: 28px;
    margin-left: 20px;
    background: #6f6f6f;
  }
`;

const TabGap = styled.div`
  flex: 0 0 39%;
`;

const ChartColumn = styled.section`
  display: flex;
  flex: 1;
  flex-direction: column;
`;

const ChartPane = styled.div`
  display: flex;
  flex: 1;
  justify-content: flex-end;
  margin-right: 5px;
  border-bottom: 2px solid #fff;
  background: #000;
`;

const ChartSvg = styled.svg`
  width: 1111px;
  height: 1072px;
`;

const ChartText = styled.text`
  fill: ${({ $dark }) => ($dark ? '#000' : '#fff')};
  font-family: ${ui};
  font-size: ${({ $size = 18 }) => $size}px;
`;

const IconText = styled.text`
  fill: ${({ $color }) => $color};
  font-family: ${ui};
  font-size: ${({ $size }) => $size}px;
  font-weight: 600;
`;

const ChartTabs = styled.div`
  display: flex;
  align-items: center;
  justify-content: flex-end;
  gap: 28px;
  height: 37px;
  padding-right: 18px;
  border-top: 3px solid #222;
`;

const TradePanel = styled.section`
  display: flex;
  height: 410px;
  padding-top: 8px;
  border-top: 2px solid #a0a0a0;
  border-bottom: 2px solid #a0a0a0;
`;

const TradeSide = styled.div`
  display: flex;
  flex-direction: column;
  gap: 10px;
  width: 29px;
  padding: 4px 3px 4px 0;
`;

const SideLabel = styled.h2`
  flex: 1;
  width: 26px;
  margin: 0;
  padding-top: 6px;
  background: linear-gradient(180deg, #b3c3da, #d3e0f2);
  font-size: 21px;
  font-weight: 400;
  line-height: 26px;
  writing-mode: vertical-rl;
  transform: rotate(180deg);
`;

const TradeMain = styled.div`
  display: flex;
  flex: 1;
  flex-direction: column;
  justify-content: space-between;
  border-top: 2px solid #a0a0a0;
  border-left: 2px solid #a0a0a0;
  background: #fff;

  > ${TabStrip} {
    padding-left: 3px;
    background: #f0f0f0;
  }
`;

const OrdersTable = styled.table`
  width: 100%;
  border-collapse: collapse;
  table-layout: fixed;
`;

const OrderCol = styled.col`
  width: ${({ $width }) => $width}px;
`;

const OrderTh = styled.th`
  height: 37px;
  padding: 0 ${({ $wide }) => ($wide ? 21 : 11)}px 0 12px;
  border-right: 2px solid #e2e2e2;
  background: #fcfcfc;
  font-weight: 400;
  text-align: ${({ $left }) => ($left ? 'left' : 'right')};
`;

const Slash = styled.span`
  margin-left: 16px;
  color: #777;
  font-size: 18px;
`;

const BalanceRow = styled.tr`
  background: #c6c6c6;
`;

const BalanceTd = styled.td`
  height: 41px;
  padding: 0 ${({ $right }) => ($right ? 56 : 0)}px 2px 12px;
  font-size: 24px;
  font-weight: 600;
  text-align: ${({ $right }) => ($right ? 'right' : 'left')};
`;

const Balance = styled.div`
  display: flex;
  align-items: center;
  gap: 14px;
`;

const OrderTr = styled.tr`
  background: ${({ $shaded }) => ($shaded ? '#ececec' : '#fff')};
`;

const OrderTd = styled.td`
  height: 40px;
  padding: 0 ${({ $wide }) => ($wide ? 21 : 8)}px 2px 5px;
  border-right: 2px solid #c4c4c4;
  border-bottom: 2px solid #c4c4c4;
  font-size: 21px;
  text-align: right;

  > button {
    margin-left: auto;
  }
`;

const OrderId = styled.div`
  display: flex;
  align-items: center;
  gap: 8px;
`;

const StatusBar = styled.footer`
  display: flex;
  align-items: center;
  justify-content: space-between;
  height: 43px;
  padding: 6px 0 0 3px;
`;

const StatusCells = styled.div`
  display: flex;
  align-self: stretch;
`;

const StatusCell = styled.div`
  width: ${({ $width }) => $width}px;
  border-left: 2px solid #b0b0b0;
`;

const Traffic = styled.div`
  display: flex;
  align-items: center;
  gap: 8px;
  width: 260px;
  padding-left: 10px;
  border-left: 2px solid #b0b0b0;
`;

const WindowTitle = styled.h2`
  grid-column: 2;
  margin: 0;
  font-size: 29px;
  font-weight: 400;
`;

const PushButton = styled.button`
  display: flex;
  align-items: center;
  justify-content: center;
  border: 2px solid ${({ $default }) => ($default ? '#3c7fb1' : '#707070')};
  background: #ddd;
`;

const BarButton = styled.button`
  display: flex;
  align-items: center;
  justify-content: center;
  width: 32px;
  height: 32px;
  border: 1px solid #c0c0c0;
  background: #fff;
`;

const Corner = styled.div`
  position: absolute;
  right: 2px;
  bottom: 2px;
`;

const ExpertFrame = styled.section`
  position: absolute;
  top: 2px;
  bottom: 9px;
  left: 586px;
  display: flex;
  flex-direction: column;
  width: 1237px;
  padding: 0 13px 13px;
  border: 2px solid #66737a;
  border-top: 0;
  background: #c5d5dc;
  font-family: ${classic};
  font-size: 21px;
  line-height: 26px;
`;

const ExpertTitleBar = styled.div`
  display: grid;
  grid-template-columns: 1fr auto 1fr;
  align-items: center;
  height: 61px;
  font-family: ${ui};

  > ${Controls} {
    justify-self: end;
    margin-right: -3px;
  }

  > ${Controls} > ${ControlButton} {
    height: 40px;
  }
`;

const ExpertClient = styled.div`
  display: flex;
  flex: 1;
  flex-direction: column;
  min-height: 0;
  padding: 15px 0 0 14px;
  border-top: 1px solid #aebbc1;
  background: #f0f0f0;
`;

const SheetTabs = styled.div`
  display: flex;
  align-items: flex-end;
  height: 40px;
  padding-left: 4px;
`;

const SheetTab = styled.button`
  width: ${({ $width }) => $width}px;
  height: 36px;
  border: 2px solid #8b8f99;
  border-bottom: 0;
  background: #ebebeb;
  ${({ $active }) => $active && css`
    position: relative;
    height: 42px;
    margin-bottom: -2px;
    padding-bottom: 8px;
    background: #fff;
  `}
`;

const Sheet = styled.div`
  display: flex;
  flex: 1;
  gap: 17px;
  min-height: 0;
  margin-right: 9px;
  padding: 18px 24px 21px 22px;
  border: 2px solid #8b8f99;
  background: #fff;
`;

const InputList = styled.div`
  display: flex;
  flex: 1;
  align-items: flex-start;
  padding: 2px 2px 0;
  border: 2px solid #828790;
  overflow: hidden;
`;

const InputTable = styled.table`
  flex: 1;
  border-collapse: separate;
  border-spacing: 0;
  table-layout: fixed;
`;

const InputCol = styled.col`
  width: ${({ $width }) => $width}px;
`;

const InputTh = styled.th`
  height: 32px;
  padding: 2px 12px 0;
  border: 1px solid #e2e2e2;
  background: #fcfcfc;
  font-weight: 400;
  text-align: left;
`;

const InputTr = styled.tr`
  background: ${({ $shaded }) => ($shaded ? '#ebebeb' : '#fff')};
`;

const InputTd = styled.td`
  height: 40px;
  padding: 2px 4px 0 5px;
  border-bottom: 2px solid #c8c8c8;

  &:first-child {
    padding-left: 1px;
    border-right: 2px solid #c8c8c8;
  }
`;

const SkippedRows = styled.tr`
  height: 960px;
`;

const NameCell = styled.div`
  display: flex;
  align-items: center;
  gap: 7px;
`;

const VerticalBar = styled.div`
  display: flex;
  flex-direction: column;
  align-self: stretch;
  width: 32px;
  margin-bottom: 4px;
  border-left: 1px solid #d8d8d8;

  > ${BarButton}:last-child {
    margin-top: auto;
  }
`;

const VerticalThumb = styled.div`
  height: 700px;
  border: 2px solid #a9a9a9;
  background: #dcdcdc;
`;

const SheetActions = styled.div`
  display: flex;
  flex-direction: column;
  justify-content: flex-end;
  gap: 24px;
  width: 206px;
  padding-bottom: 3px;

  > ${PushButton} {
    height: 42px;
  }
`;

const ExpertFooter = styled.div`
  position: relative;
  display: flex;
  justify-content: flex-end;
  gap: 16px;
  padding: 9px 18px 19px 0;

  > ${PushButton} {
    width: 146px;
    height: 42px;
  }
`;

const OpenFrame = styled.section`
  position: absolute;
  top: 370px;
  left: 541px;
  width: 1511px;
  padding: 0 13px 13px;
  border: 2px solid #33474f;
  background: #80c9e7;
`;

const OpenTitleBar = styled.div`
  display: grid;
  grid-template-columns: 1fr auto 1fr;
  align-items: center;
  height: 59px;
  padding-left: 5px;

  > svg {
    margin-bottom: 5px;
  }
`;

const CloseButton = styled.button`
  display: flex;
  align-items: center;
  justify-content: center;
  align-self: start;
  justify-self: end;
  width: 68px;
  height: 41px;
  margin-right: -3px;
  border: 2px solid #6b3a38;
  border-top: 0;
  background: #b95f53;
`;

const OpenClient = styled.div`
  border-top: 1px solid #6fa6c0;
  background: #fff;
`;

const AddressRow = styled.div`
  display: flex;
  align-items: center;
  gap: 20px;
  height: 73px;
  padding: 0 22px 2px 20px;
`;

const NavButtons = styled.div`
  display: flex;
  align-items: center;
  gap: 23px;
  width: 174px;
`;

const AddressBox = styled.div`
  display: flex;
  flex: 1;
  align-items: center;
  gap: 20px;
  height: 48px;
  padding: 0 14px 0 8px;
  border: 2px solid #858585;
`;

const CrumbMark = styled.span`
  margin-left: -8px;
  padding-bottom: 2px;
  color: #555;
  font-size: 28px;
`;

const Crumb = styled.button`
  padding-bottom: 2px;
`;

const AddressTools = styled.div`
  display: flex;
  align-items: center;
  gap: 24px;
  margin-left: auto;
`;

const SearchBox = styled.div`
  display: flex;
  align-items: center;
  width: 408px;
  height: 46px;
  padding: 0 18px;
  border: 2px solid #858585;
`;

const SearchInput = styled.input`
  flex: 1;
  min-width: 0;
  padding-bottom: 2px;
  outline: 0;

  &::placeholder {
    color: #757575;
  }
`;

const CommandRow = styled.div`
  display: flex;
  align-items: center;
  gap: 44px;
  height: 62px;
  padding: 0 30px 2px 29px;
  background: #f0f0f0;
`;

const CommandButton = styled.button`
  display: flex;
  align-items: center;
  gap: 17px;
`;

const CommandTools = styled.div`
  display: flex;
  align-items: center;
  gap: 28px;
  margin-left: auto;
`;

const Browser = styled.div`
  display: flex;
  height: 593px;
`;

const Places = styled.nav`
  width: 318px;
  padding: 18px 3px;
  border-right: 1px solid #f0f0f0;
`;

const Place = styled.a`
  display: flex;
  align-items: center;
  gap: 10px;
  height: 42px;
  margin-top: ${({ $apart }) => ($apart ? 42 : 0)}px;
  padding-left: ${({ $nested }) => ($nested ? 56 : 36)}px;
  border: 2px solid ${({ $selected }) => ($selected ? '#dedede' : 'transparent')};
  background: ${({ $selected }) => ($selected ? '#f3f3f3' : 'none')};
  color: #000;
  text-decoration: none;
`;

const Files = styled.div`
  display: flex;
  flex: 1;
  flex-direction: column;
  justify-content: space-between;
  padding-left: 2px;
`;

const FileTable = styled.table`
  width: 100%;
  border-collapse: separate;
  border-spacing: 0;
  table-layout: fixed;
`;

const FileCol = styled.col`
  width: ${({ $width }) => $width}px;
`;

const FileTh = styled.th`
  position: relative;
  height: 50px;
  padding: 0 0 0 ${({ $first }) => ($first ? 34 : 12)}px;
  border: 2px solid #e5e5e5;
  border-left: 0;
  background: #fcfcfc;
  color: #4c5c78;
  font-weight: 400;
  text-align: left;

  &:last-child {
    border-right: 0;
  }
`;

const SortMark = styled.span`
  position: absolute;
  top: 0;
  left: 275px;
`;

const FileTd = styled.td`
  height: 68px;
  padding: 0 0 2px ${({ $first }) => ($first ? 36 : 12)}px;
  color: ${({ $first }) => ($first ? '#000' : '#6d6d6d')};
`;

const FileName = styled.div`
  display: flex;
  align-items: center;
  gap: 10px;
`;

const HorizontalBar = styled.div`
  display: flex;
  justify-content: space-between;
  height: 33px;
  border: 1px solid #c6c6c6;
  border-width: 1px 0;
`;

const HorizontalThumb = styled.div`
  flex: 1;
  margin-right: 42px;
  border: 1px solid #a9a9a9;
  background: #dcdcdc;
`;

const OpenFooter = styled.div`
  position: relative;
  padding: 19px 36px 26px 0;
  background: #f0f0f0;
`;

const FieldRow = styled.div`
  display: flex;
  align-items: center;
`;

const FieldLabel = styled.label`
  width: 378px;
  padding-right: 11px;
  text-align: right;
`;

const ComboBox = styled.div`
  display: flex;
  flex: 1;
  align-items: center;
  height: 48px;
  margin-right: 25px;
  padding: 0 6px;
  border: 2px solid #858585;
  background: #fff;
`;

const ComboInput = styled.input`
  flex: 1;
  min-width: 0;
  outline: 0;
`;

const TypeBox = styled(ComboBox)`
  flex: none;
  width: 375px;
  height: 46px;
  margin-right: 0;
`;

const TypeSelect = styled.select`
  flex: 1;
  min-width: 0;
  padding-bottom: 2px;
  appearance: none;
  outline: 0;
`;

const OpenActions = styled.div`
  display: flex;
  justify-content: flex-end;
  gap: 28px;
  margin-top: 12px;

  > ${PushButton} {
    width: 172px;
    height: 48px;
    padding-bottom: 2px;
  }
`;

const Menu = styled.div`
  position: absolute;
  top: 773px;
  left: 1168px;
  width: 398px;
  padding: 4px;
  border: 2px solid #a0a0a0;
  background: linear-gradient(90deg, transparent 58px, #c4c4c4 58px 60px, transparent 60px) #f0f0f0;
`;

const MenuItem = styled.button`
  display: flex;
  align-items: center;
  justify-content: space-between;
  width: 100%;
  height: 44px;
  padding: 0 17px 2px ${({ $hover }) => ($hover ? 62 : 64)}px;
  border: ${({ $hover }) => ($hover ? '2px solid #858585' : '0')};
  background: ${({ $hover }) => ($hover ? '#ededed' : 'none')};

  &:disabled {
    color: #757575;
  }
`;

const Shortcut = styled.span`
  margin-right: 20px;
`;

const MenuLine = styled.hr`
  height: 2px;
  margin: 3px 0 3px 56px;
  border: 0;
  background: #c4c4c4;
`;

export default App;
